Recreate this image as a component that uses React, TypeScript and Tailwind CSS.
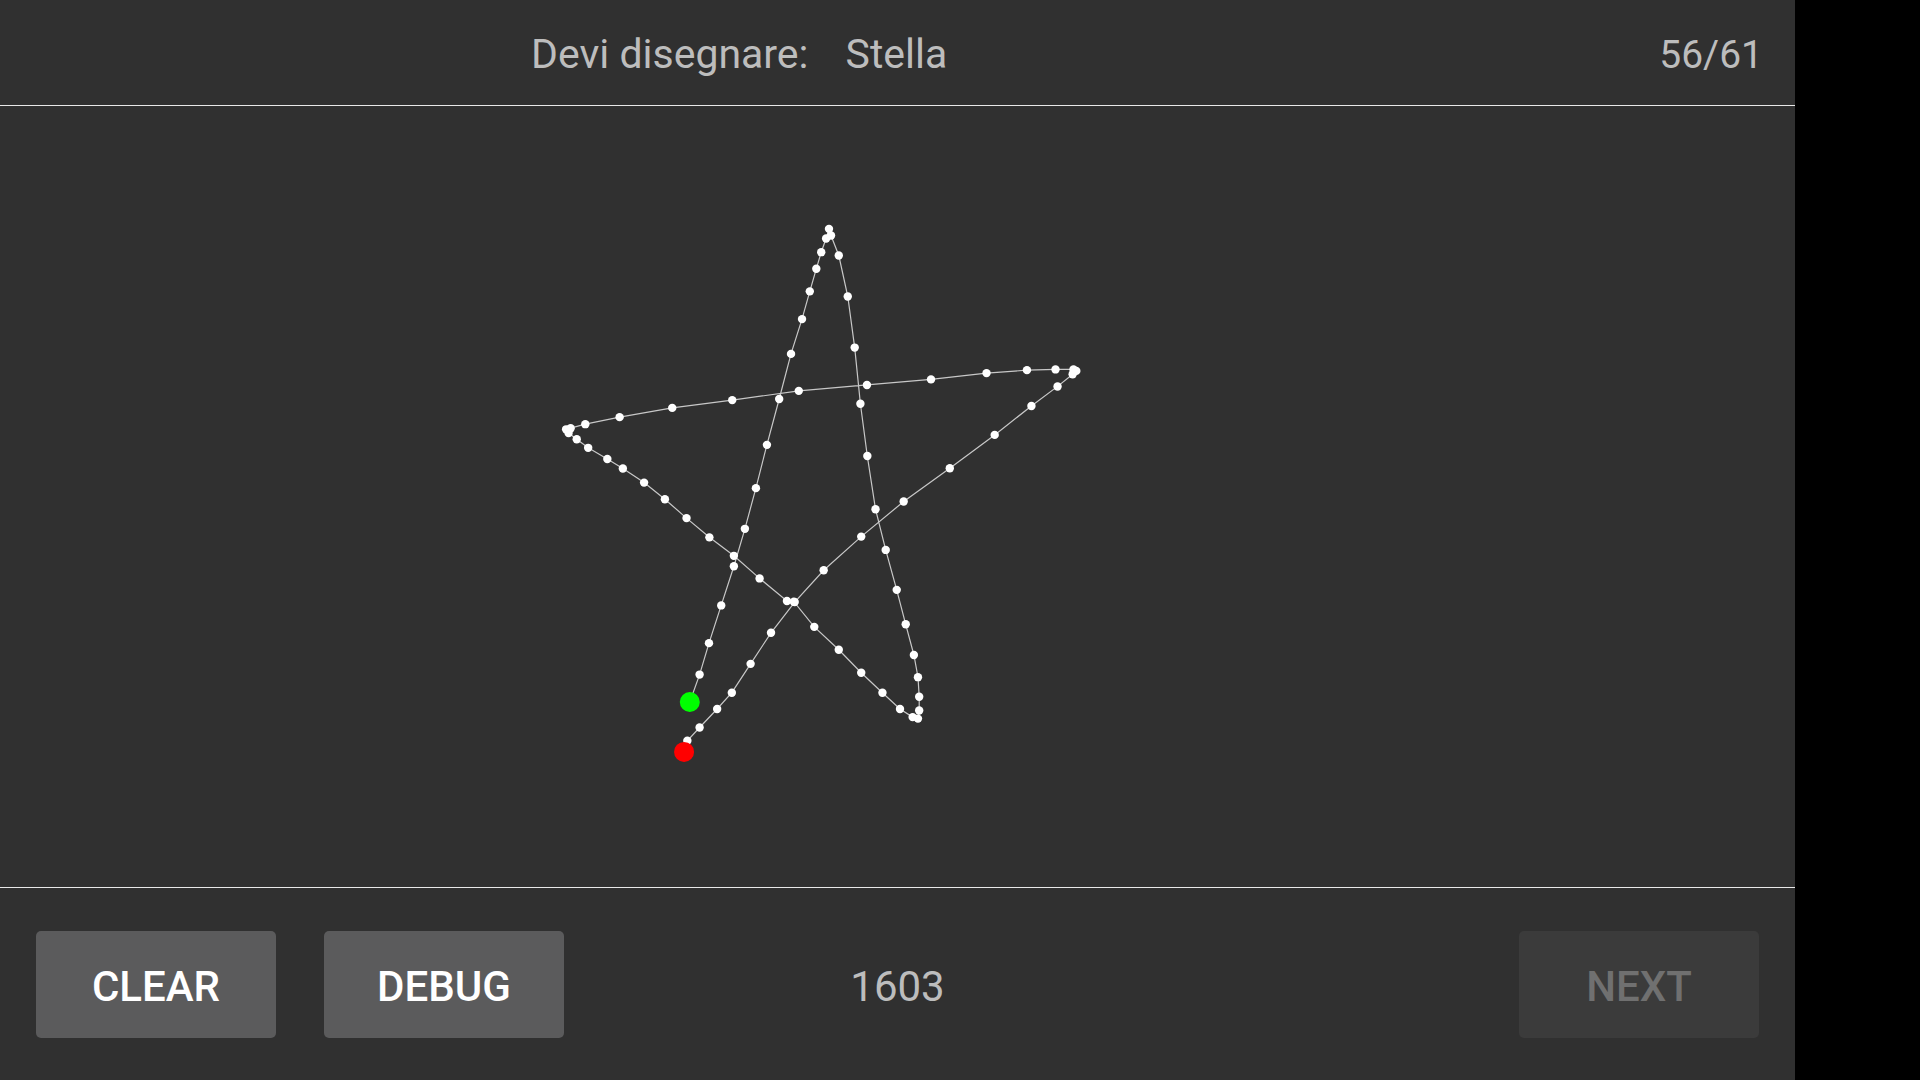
import React from "react";

const RAW: [number, number][] = [
  [465, 1357], [489, 1283], [512, 1198], [542, 1096], [573, 990], [600, 889], [627, 779], [654, 662], [684, 538], [713, 416], [740, 322], [759, 247], [775, 186], [787, 141], [799, 104], [806, 78], [811, 96], [830, 150], [852, 261], [869, 399], [883, 551], [900, 692], [920, 836], [945, 946], [972, 1054], [994, 1147], [1014, 1230], [1024, 1290], [1027, 1343], [1027, 1380], [1024, 1402], [1011, 1398], [980, 1376], [937, 1332], [885, 1278], [830, 1216], [770, 1154], [720, 1086], [703, 1084], [636, 1023], [573, 962], [513, 912], [457, 860], [404, 809], [353, 764], [301, 726], [263, 700], [216, 670], [188, 647], [168, 630], [162, 620], [173, 617], [209, 606], [293, 587], [422, 562], [569, 541], [732, 516], [899, 500], [1056, 485], [1192, 468], [1291, 460], [1361, 458], [1405, 458], [1412, 462], [1403, 471], [1366, 504], [1302, 557], [1212, 635], [1102, 725], [989, 815], [885, 910], [793, 1001], [722, 1087], [664, 1170], [614, 1254], [568, 1332], [532, 1376], [489, 1426], [459, 1462], [451, 1492],
];

const SX = 1568 / 640;
const SY = 1568 / 580;
const PTS = RAW.map(([x, y]) => [500 + x / SX, 200 - 106 + y / SY] as [number, number]);

function Star() {
  const d = PTS.map((p, i) => `${i === 0 ? "M" : "L"}${p[0].toFixed(1)} ${p[1].toFixed(1)}`).join(" ");
  const first = PTS[0];
  const last = PTS[PTS.length - 1];
  return (
    <svg width="1795" height="781" viewBox="0 0 1795 781" className="block">
      <path d={d} fill="none" stroke="#c8c8c8" strokeWidth="1.2" />
      {PTS.slice(1, -1).map((p, i) => (
        <circle key={i} cx={p[0]} cy={p[1]} r="4.2" fill="#ffffff" />
      ))}
      <circle cx={first[0]} cy={first[1]} r="10" fill="#00ff00" />
      <circle cx={last[0]} cy={last[1]} r="10" fill="#ff0000" />
    </svg>
  );
}

export default function App() {
  return (
    <div className="flex h-[1080px] w-[1920px] bg-black" style={{ fontFamily: "Roboto, 'Liberation Sans', sans-serif" }}>
      <div className="flex h-full w-[1795px] flex-col bg-[#303030]">
        <div className="flex h-[105px] items-center pt-[5px] text-[#bdbdbd]">
          <div className="flex items-center pl-[531px]">
            <span className="text-[41px]">Devi disegnare:</span>
            <span className="ml-[37px] text-[41px]">Stella</span>
          </div>
          <div className="flex-1" />
          <span className="pr-[32px] text-[39px]">56/61</span>
        </div>
        <div className="h-px bg-[#e8e8e8]" />
        <div className="h-[781px] overflow-hidden">
          <Star />
        </div>
        <div className="h-px bg-[#e8e8e8]" />
        <div className="grid flex-1 grid-cols-3 items-center px-[36px]">
          <div className="flex gap-[48px]">
            <button className="flex h-[107px] w-[240px] items-center justify-center rounded-[5px] bg-[#5b5b5c] pt-[4px] text-[42px] font-medium text-white">
              CLEAR
            </button>
            <button className="flex h-[107px] w-[240px] items-center justify-center rounded-[5px] bg-[#5b5b5c] pt-[4px] text-[42px] font-medium text-white">
              DEBUG
            </button>
          </div>
          <div className="justify-self-center pt-[4px] text-[42px] text-[#bdbdbd]">1603</div>
          <div className="flex justify-end">
            <button className="flex h-[107px] w-[240px] items-center justify-center rounded-[5px] bg-[#3b3b3b] pt-[4px] text-[42px] font-medium text-[#707070]">
              NEXT
            </button>
          </div>
        </div>
      </div>
    </div>
  );
}
